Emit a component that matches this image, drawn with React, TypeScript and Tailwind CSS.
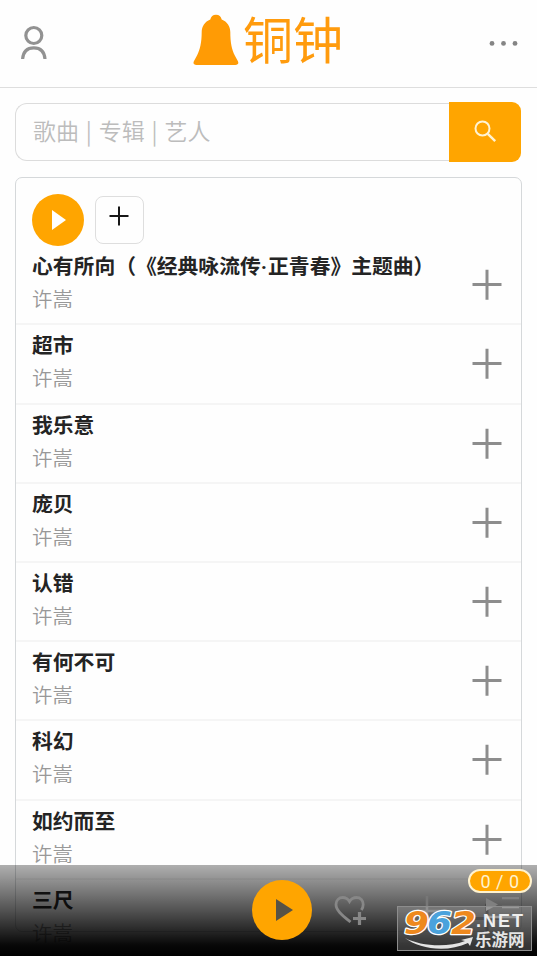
const songs = [
  '心有所向（《经典咏流传·正青春》主题曲）',
  '超市',
  '我乐意',
  '庞贝',
  '认错',
  '有何不可',
  '科幻',
  '如约而至',
  '三尺',
];

function Header() {
  return (
    <header className="flex h-[88px] items-start justify-between border-b border-[#dedede]">
      <svg className="ml-[20px] mt-[25px] h-[35px] w-[28px] shrink-0" viewBox="0 0 28 35" fill="none" stroke="#929292" strokeWidth="3.2">
        <circle cx="13.8" cy="10.5" r="8" />
        <path d="M2.6 34C3.2 26 8 22.8 13.8 22.8S24.400 26 25 34" />
      </svg>
      <div className="flex items-start">
        <svg className="-ml-px mr-[4px] mt-[14px] h-[52px] w-[46px]" viewBox="0 0 46 52" fill="#ff9b05">
          <path d="M23 .8c3.200 0 5 2 5.700 4.700 5.500 2.300 8.600 6.800 8.600 12.500 0 10.500 1.500 17.500 4.500 23.500l3 5.500c1.200 2.500.2 4-2.500 4H3.500C.8 51-.2 49.500 1 47l3-5.500c3-6 4.700-13 4.700-23.500 0-5.700 3.100-10.200 8.600-12.500C18 2.800 19.800.8 23 .8Z" />
        </svg>
        <span className="mt-[7px] h-[60px] text-[50px] leading-[60px] text-[#ff9b0d]">铜钟</span>
      </div>
      <svg className="mr-[18px] mt-[40px] h-[7px] w-[30px]" viewBox="0 0 30 7" fill="#858585">
        <circle cx="3" cy="3.400" r="2.400" />
        <circle cx="14.500" cy="3.400" r="2.400" />
        <circle cx="26" cy="3.400" r="2.400" />
      </svg>
    </header>
  );
}

function SearchBar() {
  return (
    <div className="mx-[15px] mt-[14px] flex h-[60px] w-[506px]">
      <div className="mt-px flex h-[58px] flex-1 items-center rounded-l-[12px] border border-r-0 border-[#dcdcdc] pb-[4px] pl-[17px] text-[23px] font-[350] text-[#bcbcbc]">
        <span className="whitespace-pre [word-spacing:1.700px]">歌曲 | 专辑 | 艺人</span>
      </div>
      <div className="flex h-[60px] w-[72px] items-center justify-center rounded-r-[9px] bg-[#ffa500]">
        <svg className="mb-[2px] h-[24px] w-[24px]" viewBox="0 0 24 24" fill="none" stroke="#fff3d2" strokeWidth="2">
          <circle cx="9.500" cy="9.500" r="7" />
          <path d="m14.800 14.800 7.400 7.400" strokeWidth="2.400" />
        </svg>
      </div>
    </div>
  );
}

function SongTitle({ title }: { title: string }) {
  const [head, tail] = title.split('·');
  return (
    <div className="h-[30px] text-[20.800px] font-bold leading-[30px] text-[#242424] [text-spacing-trim:space-all]">
      {head}
      {tail && <span className="mr-px font-[Roboto]">·</span>}
      {tail}
    </div>
  );
}

function SongRow({ title }: { title: string }) {
  return (
    <li className="flex h-[79.200px] shrink-0 items-start justify-between border-b-2 border-[#f5f5f5] pl-[16px] pr-[18px]">
      <div className="whitespace-nowrap pt-[4px]">
        <SongTitle title={title} />
        <div className="mt-[3px] h-[30px] text-[20.400px] font-[350] leading-[30px] text-[#989898]">许嵩</div>
      </div>
      <svg className="mt-[23px] h-[32px] w-[32px]" viewBox="0 0 32 32" stroke="#8d8d8d" strokeWidth="3">
        <path d="M1.500 15.500h29M16 .8v30" />
      </svg>
    </li>
  );
}

function SongCard() {
  return (
    <section className="mx-[15px] mt-[15px] h-[755px] w-[507px] rounded-[7px] border border-[#d5d8da]">
      <div className="flex h-[68.200px] items-start pl-[16px] pt-[16px]">
        <button className="flex h-[52px] w-[52px] items-center justify-center rounded-full bg-[#ffa500]">
          <svg className="ml-[2px] h-[20px] w-[14px]" viewBox="0 0 14 20" fill="white"><path d="M0 0v20l14-10Z" /></svg>
        </button>
        <button className="ml-[11px] mt-[2px] flex h-[48px] w-[49px] justify-center rounded-[8px] border border-[#dedede] pt-[9px]">
          <svg className="mr-px h-[20px] w-[20px]" viewBox="0 0 20 20" stroke="#171717" strokeWidth="2"><path d="M.5 10h19M10 .5v19" /></svg>
        </button>
      </div>
      <ul className="flex flex-col">
        {songs.map((song) => <SongRow key={song} title={song} />)}
      </ul>
    </section>
  );
}

function Watermark() {
  return (
    <div className="absolute left-[397px] top-[906px] h-[45px] w-[135px] border border-[#8d8d8d] bg-[#ffffff30]">
      <svg className="block h-[43px] w-[133px] overflow-visible" viewBox="0 0 133 43">
        <g transform="translate(6 27) scale(1.120 1)" fontFamily="DejaVu Sans" fontWeight="700" fontStyle="italic" fontSize="32" stroke="white" strokeWidth="2.500" strokeLinejoin="round" paintOrder="stroke">
          <text x="0" y="0" fill="#ee891e">9</text>
          <text x="20.500" y="0" fill="#4aa2dc">6</text>
          <text x="42" y="0" fill="#ee891e">2</text>
        </g>
        <path d="M7 31c15 8 42 10 60 3l-4-1 12-3-3 9-2-3C49 46 21 42 7 31Z" fill="#e4e4e4" />
        <text x="78" y="20" fontFamily="Liberation Sans" fontWeight="700" fontSize="18" fill="#eee" letterSpacing="2">.NET</text>
        <text x="77" y="39" fontWeight="700" fontSize="16.500" fill="#e4e4e4">乐游网</text>
      </svg>
    </div>
  );
}

function Player() {
  return (
    <footer className="absolute inset-x-0 bottom-0 h-[91px] bg-[linear-gradient(to_bottom,rgba(0,0,0,.31),rgba(0,0,0,.68)_50%,rgba(0,0,0,.97)_88%,black)]">
      <div className="flex items-start pl-[252px] pt-[15px]">
        <button className="flex h-[60px] w-[60px] items-center justify-center rounded-full bg-[#ffa500]">
          <svg className="ml-[4px] h-[22px] w-[17px]" viewBox="0 0 17 22" fill="#575346"><path d="M0 0v22l17-11Z" /></svg>
        </button>
        <svg className="ml-[21px] mt-[14px] h-[32px] w-[34px]" viewBox="0 0 34 32" fill="none" stroke="#878787" strokeWidth="2.800">
          <path d="M17.500 28C9.500 21.500 3 16.500 3 10.500 3 6.300 6 3.500 9.700 3.500c3 0 5.300 1.500 6.800 4 1.500-2.500 4-4 7-4 4 0 6.700 3 6.700 7 0 2-.7 3.800-1.800 5.500" />
          <path d="M20 24.500h13M26.500 18v13" strokeWidth="3.200" />
        </svg>
        <svg className="ml-[47px] mt-[15px] h-[32px] w-[28px]" viewBox="0 0 28 32" stroke="#777" strokeWidth="2.500"><path d="M0 16h28M13 1v30" /></svg>
        <svg className="ml-[44px] mt-[17px] h-[30px] w-[34px]" viewBox="0 0 34 30" stroke="#808080" strokeWidth="2.500">
          <path d="M0 1v13l12-6.500Z" fill="#808080" stroke="none" />
          <path d="M16 1h17M16 10h17M0 20h33" />
        </svg>
      </div>
    </footer>
  );
}

export default function App() {
  return (
    <main className="relative h-[956px] w-[537px] overflow-hidden bg-[#fefefe] font-['Noto_Sans_CJK_SC',sans-serif]">
      <Header />
      <SearchBar />
      <SongCard />
      <Player />
      <Watermark />
      <div className="absolute left-[468px] top-[869px] flex h-[24px] w-[64px] items-center justify-center rounded-full border-2 border-[#fff3cf] bg-[#ffa500] font-[Roboto,sans-serif] text-[18px] tracking-[.5px] text-[#fff3cf]">0 / 0</div>
    </main>
  );
}
